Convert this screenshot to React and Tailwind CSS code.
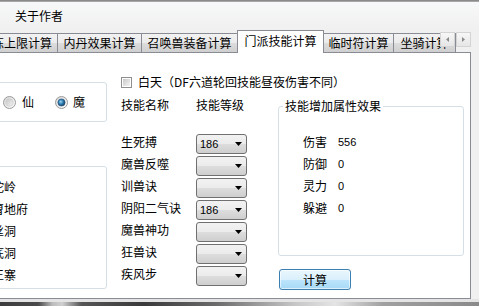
import React from "react";

function Radio({ checked }) {
  return (
    <svg width="13" height="13" viewBox="0 0 13 13" className="shrink-0">
      <defs>
        <linearGradient id="rgRing" x1="0" y1="0" x2="1" y2="1">
          <stop offset="0" stopColor="#d6d6d6" />
          <stop offset="1" stopColor="#ffffff" />
        </linearGradient>
        <linearGradient id="rgIn" x1="0" y1="0" x2="1" y2="1">
          <stop offset="0" stopColor="#c4c4c4" />
          <stop offset="1" stopColor="#f4f4f4" />
        </linearGradient>
        <radialGradient id="rgDot" cx="0.4" cy="0.4" r="0.7">
          <stop offset="0" stopColor="#9fd8f6" />
          <stop offset="0.45" stopColor="#2f7fb3" />
          <stop offset="1" stopColor="#13344f" />
        </radialGradient>
      </defs>
      <circle cx="6.5" cy="6.5" r="6" fill="url(#rgRing)" stroke="#9a9a9a" />
      {checked ? (
        <circle cx="6.5" cy="6.5" r="3.6" fill="url(#rgDot)" stroke="#1f4e73" strokeWidth="0.6" />
      ) : (
        <circle cx="6.5" cy="6.5" r="3.8" fill="url(#rgIn)" stroke="#c9c9c9" strokeWidth="0.6" />
      )}
    </svg>
  );
}

function Combo({ value }) {
  return (
    <div className="mt-[1px] w-[51px] h-[20px] shrink-0 rounded-[3px] border border-[#707070] bg-[linear-gradient(#f2f2f2_0%,#ebebeb_50%,#dddddd_50%,#cfcfcf_100%)] flex items-center justify-between pl-[3px] pr-[4px]">
      <span className="font-['Liberation_Sans',sans-serif] text-[11px] leading-[14px]">{value}</span>
      <svg width="7" height="4" viewBox="0 0 7 4">
        <polygon points="0,0 7,0 3.5,4" fill="#000" />
      </svg>
    </div>
  );
}

export default function App() {
  const skills = [
    ["生死搏", "186"],
    ["魔兽反噬", ""],
    ["训兽诀", ""],
    ["阴阳二气诀", "186"],
    ["魔兽神功", ""],
    ["狂兽诀", ""],
    ["疾风步", ""],
  ];
  const stats = [
    ["伤害", "556"],
    ["防御", "0"],
    ["灵力", "0"],
    ["躲避", "0"],
  ];
  const factions = ["狮驼岭", "阴曹地府", "盘丝洞", "无底洞", "魔王寨"];

  return (
    <div className="relative w-[479px] h-[306px] overflow-hidden bg-[#f0f0f0] flex flex-col font-['Noto_Sans_CJK_SC','Noto_Sans',sans-serif] text-[12px] leading-[16px] text-black">
      {/* window top edge */}
      <div className="h-[2px] shrink-0 bg-[linear-gradient(#7d7d7d,#b4b4b4)]" />
      {/* menu bar */}
      <div className="h-[28px] shrink-0 bg-[linear-gradient(#f7f8f9,#f0f0f0)]">
        <div className="pt-[6px] pl-[15px] whitespace-nowrap">关于作者</div>
      </div>

      {/* tab strip */}
      <div className="relative z-10 h-[22px] shrink-0 -ml-[26px] flex items-end whitespace-nowrap">
        <div className="w-[84px] h-[19px] shrink-0 border border-b-0 border-[#898c95] bg-[linear-gradient(#f2f2f2_0%,#ebebeb_50%,#dddddd_50%,#cfcfcf_100%)] flex items-center justify-center">修炼上限计算</div>
        <div className="-ml-[1px] w-[85px] h-[19px] shrink-0 border border-b-0 border-[#898c95] bg-[linear-gradient(#f2f2f2_0%,#ebebeb_50%,#dddddd_50%,#cfcfcf_100%)] flex items-center justify-center">内丹效果计算</div>
        <div className="-ml-[1px] w-[97px] h-[19px] shrink-0 border border-b-0 border-[#898c95] bg-[linear-gradient(#f2f2f2_0%,#ebebeb_50%,#dddddd_50%,#cfcfcf_100%)] flex items-center justify-center">召唤兽装备计算</div>
        <div className="-ml-[1px] -mb-[1px] w-[87px] h-[23px] shrink-0 border border-b-0 border-[#898c95] bg-white flex items-center justify-center pb-[3px]">门派技能计算</div>
        <div className="-ml-[1px] w-[71px] h-[19px] shrink-0 border border-b-0 border-[#898c95] bg-[linear-gradient(#f2f2f2_0%,#ebebeb_50%,#dddddd_50%,#cfcfcf_100%)] flex items-center justify-center">临时符计算</div>
        <div className="-ml-[1px] w-[63px] h-[19px] shrink-0 border border-b-0 border-[#898c95] bg-[linear-gradient(#f2f2f2_0%,#ebebeb_50%,#dddddd_50%,#cfcfcf_100%)] flex items-center justify-center">坐骑计算</div>
      </div>

      {/* tab scroll arrows (overlay) */}
      <div className="absolute z-20 left-[440px] top-[32px] flex gap-[1px]">
        <div className="w-[15px] h-[15px] border border-[#d4d4d4] bg-[linear-gradient(#f7f7f7,#e6e6e6)] flex items-center justify-center">
          <svg width="3" height="5" viewBox="0 0 3 5">
            <polygon points="3,0 3,5 0,2.5" fill="#8a8a8a" />
          </svg>
        </div>
        <div className="w-[15px] h-[15px] border border-[#d4d4d4] bg-[linear-gradient(#f7f7f7,#e6e6e6)] flex items-center justify-center">
          <svg width="3" height="5" viewBox="0 0 3 5">
            <polygon points="0,0 0,5 3,2.5" fill="#8a8a8a" />
          </svg>
        </div>
      </div>

      {/* tab panel */}
      <div className="-ml-[10px] w-[481px] h-[247px] shrink-0 border border-[#898c95] bg-white flex">
        {/* left column */}
        <div className="w-[116px] shrink-0 flex flex-col">
          <div className="mt-[29px] h-[40px] rounded-[3px] border border-[#d5dfe5] flex items-center pl-[11px]">
            <Radio checked={false} />
            <span className="ml-[6px]">仙</span>
            <span className="ml-[21px]"><Radio checked={true} /></span>
            <span className="ml-[5px]">魔</span>
          </div>
          <div className="mt-[44px] h-[123px] rounded-[3px] border border-[#d5dfe5] pt-[9px] flex flex-col">
            {factions.map((f) => (
              <div key={f} className="h-[22px] -ml-[12px] flex items-center whitespace-nowrap">{f}</div>
            ))}
          </div>
        </div>

        {/* right part */}
        <div className="ml-[14px] flex flex-col">
          <div className="mt-[21px] h-[16px] flex items-center whitespace-nowrap">
            <div className="w-[11px] h-[11px] shrink-0 border border-[#8f8f8f] bg-white p-[1px]">
              <div className="w-full h-full bg-[linear-gradient(135deg,#c8c8c8,#f4f4f4)]" />
            </div>
            <span className="ml-[6px]">白天（DF六道轮回技能昼夜伤害不同）</span>
          </div>

          <div className="flex">
            {/* middle column */}
            <div className="w-[157px] shrink-0 flex flex-col">
              <div className="mt-[7px] h-[16px] flex whitespace-nowrap">
                <span className="w-[75px]">技能名称</span>
                <span>技能等级</span>
              </div>
              <div className="mt-[20px] flex flex-col">
                {skills.map(([name, val]) => (
                  <div key={name} className="h-[22px] flex items-start whitespace-nowrap">
                    <span className="mt-[1px] w-[75px] shrink-0">{name}</span>
                    <Combo value={val} />
                  </div>
                ))}
              </div>
            </div>

            {/* right column */}
            <div className="w-[186px] shrink-0 flex flex-col">
              <fieldset className="mt-[8px] w-[186px] h-[158px] rounded-[3px] border border-[#d5dfe5] px-0 pt-[17px]">
                <legend className="ml-[4px] px-[2px] leading-[16px]">技能增加属性效果</legend>
                {stats.map(([k, v]) => (
                  <div key={k} className="h-[22px] pl-[24px] flex items-center">
                    <span className="w-[35px] shrink-0">{k}</span>
                    <span className="font-['Liberation_Sans',sans-serif] text-[11px]">{v}</span>
                  </div>
                ))}
              </fieldset>
              <button className="mt-[13px] ml-[1px] w-[72px] h-[21px] rounded-[3px] border border-[#3c7fb1] bg-[linear-gradient(#eaf6fd_0%,#d9f0fc_50%,#bee6fd_50%,#a7d9f5_100%)] shadow-[inset_0_0_0_1px_rgba(255,255,255,0.6)] flex items-center justify-center text-[12px] leading-[16px]">
                计算
              </button>
            </div>
          </div>
        </div>
      </div>

      {/* bottom frame */}
      <div className="h-[3px] shrink-0 bg-[#e4e4e4]" />
      <div className="h-[4px] shrink-0 bg-[linear-gradient(to_right,#3c3c3c_0%,#4a4a4a_8%,#bdbdbd_11%,#d0d0d0_13%,#555555_17%,#3a3a3a_30%,#6a6a6a_45%,#c8c8c8_62%,#e4e4e4_70%,#a0a0a0_80%,#8a8a8a_100%)]" />
    </div>
  );
}
